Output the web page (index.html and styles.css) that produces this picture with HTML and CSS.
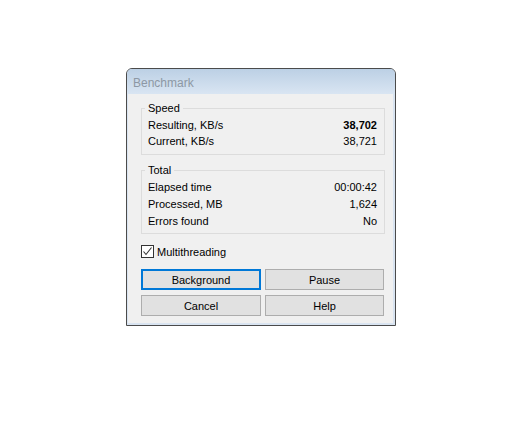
FILE: index.html
```html
<!DOCTYPE html>
<html>
<head>
<meta charset="utf-8">
<link rel="stylesheet" href="styles.css">
</head>
<body>
<div class="window">
  <div class="titlebar"><span class="title">Benchmark</span></div>
  <div class="client">
    <fieldset class="group speed">
      <legend>Speed</legend>
      <div class="row"><span>Resulting, KB/s</span><span class="bold">38,702</span></div>
      <div class="row"><span>Current, KB/s</span><span>38,721</span></div>
    </fieldset>
    <fieldset class="group total">
      <legend>Total</legend>
      <div class="row r17"><span>Elapsed time</span><span>00:00:42</span></div>
      <div class="row r17"><span>Processed, MB</span><span>1,624</span></div>
      <div class="row r17"><span>Errors found</span><span>No</span></div>
    </fieldset>
    <label class="check">
      <span class="box"><svg width="11" height="11" viewBox="0 0 11 11"><path d="M1.5 5.5 L4 8.5 L9.5 1.5" fill="none" stroke="#333" stroke-width="1.1"/></svg></span>
      <span>Multithreading</span>
    </label>
    <div class="buttons">
      <button class="btn default">Background</button>
      <button class="btn">Pause</button>
      <button class="btn">Cancel</button>
      <button class="btn">Help</button>
    </div>
  </div>
</div>
</body>
</html>
```
FILE: styles.css
```css
html, body {
  margin: 0;
  padding: 0;
  background: #ffffff;
}
body {
  padding: 68px 0 0 126px;
  font-family: "Liberation Sans", Arial, sans-serif;
  font-size: 11px;
  color: #000;
}
.window {
  width: 268px;
  height: 256px;
  border: 1px solid #4b4b4b;
  border-radius: 6px 6px 0 0;
  background: #d9e4f1;
  display: flex;
  flex-direction: column;
}
.titlebar {
  height: 25px;
  flex: none;
  border-radius: 5px 5px 0 0;
  background: linear-gradient(#bcd0e5, #d9e5f2);
  display: flex;
  align-items: center;
  padding-left: 6px;
}
.title {
  font-size: 12px;
  color: #8d98a4;
  margin-top: 2px;
}
.client {
  flex: 1;
  margin: 0 2px 2px 1px;
  background: #f0f0f0;
  padding: 8px 8px 0 13px;
}
.group {
  margin: 0;
  padding: 2px 7px 5px 6px;
  border: 1px solid #dcdcdc;
  min-width: 0;
}
.group legend {
  padding: 0 3px;
  margin-left: -3px;
  line-height: 13px;
}
.total {
  margin-top: 9px;
  padding-top: 2px;
  padding-bottom: 3px;
}
.row {
  display: flex;
  justify-content: space-between;
  line-height: 16px;
}
.r17 {
  line-height: 17px;
}
.bold {
  font-weight: bold;
}
.check {
  display: flex;
  align-items: center;
  gap: 3px;
  margin-top: 11px;
  height: 13px;
}
.box {
  width: 11px;
  height: 11px;
  border: 1px solid #333;
  background: #fff;
  display: flex;
}
.buttons {
  margin-top: 11px;
  display: grid;
  grid-template-columns: 120px 119px;
  column-gap: 4px;
  row-gap: 5px;
}
.btn {
  height: 21px;
  margin: 0;
  padding: 0;
  background: #e1e1e1;
  border: 1px solid #adadad;
  font-family: "Liberation Sans", Arial, sans-serif;
  font-size: 11px;
  color: #000;
}
.btn.default {
  border: 2px solid #0078d7;
}
```
